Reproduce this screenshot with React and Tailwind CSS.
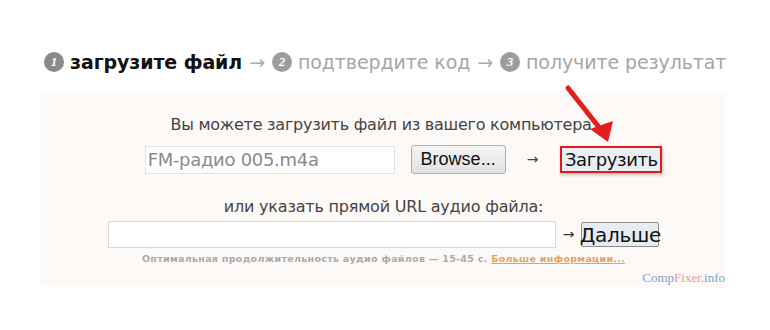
function Step({ n, active, children }) {
  return (
    <span className="inline-flex items-center gap-[6px]">
      <span
        className={`shrink-0 w-[20px] h-[20px] rounded-full flex items-center justify-center text-white text-[13px] font-bold italic ${
          active ? "bg-[#8a8a8a]" : "bg-[#9d9d9d]"
        }`}
        style={{ fontFamily: "'Liberation Serif', serif" }}
      >
        {n}
      </span>
      <span className={active ? "font-bold text-[#111]" : "text-[#a6a6a6]"}>{children}</span>
    </span>
  );
}

export default function App() {
  return (
    <div
      className="w-[770px] h-[330px] bg-white relative overflow-hidden"
      style={{ fontFamily: "'DejaVu Sans', Verdana, sans-serif" }}
    >
      {/* steps header */}
      <div className="pt-[50px] pl-[44px] flex items-center gap-[7px] text-[19px] leading-[24px] tracking-[-0.1px]">
        <Step n="1" active>
          загрузите файл
        </Step>
        <span className="text-[#aaa]">→</span>
        <Step n="2">подтвердите код</Step>
        <span className="text-[#aaa]">→</span>
        <Step n="3">получите результат</Step>
      </div>

      {/* upload panel */}
      <div className="mt-[19px] mx-[42px] w-[683px] h-[192px] bg-[#fdf9f7] shadow-[0_0_6px_3px_#fefbfa] flex flex-col items-center">
        <p className="mt-[22px] text-[16px] leading-[20px] text-[#444] tracking-[-0.25px]">
          Вы можете загрузить файл из вашего компьютера.
        </p>
        <div className="mt-[10px] flex items-center ml-[40px]">
          <div className="w-[250px] h-[28px] bg-white border border-[#e2e2e2] flex items-center pl-[2px] text-[18px] text-[#8a8a8a] tracking-[-0.3px]">
            FM-радио 005.m4a
          </div>
          <button
            className="ml-[16px] w-[95px] h-[29px] rounded-[3px] border border-[#adadad] bg-gradient-to-b from-[#f4f4f4] to-[#e2e2e2] text-[18px] text-[#111] flex items-center justify-center"
            style={{ fontFamily: "'Liberation Sans', Arial, sans-serif" }}
          >
            Browse...
          </button>
          <span className="ml-[21px] text-[14px] text-[#444]">→</span>
          <button className="ml-[22px] w-[102px] h-[27px] border-2 border-[#e11b1b] bg-[#e9eef3] text-[18px] text-[#111] flex items-center justify-center shadow-[1px_2px_3px_rgba(0,0,0,0.25)] tracking-[-0.4px]">
            Загрузить
          </button>
        </div>

        <p className="mt-[23px] text-[16px] leading-[20px] text-[#444] tracking-[-0.2px]">
          или указать прямой URL аудио файла:
        </p>
        <div className="mt-[4px] flex items-center">
          <div className="w-[448px] h-[27px] bg-white border border-[#d9d9d9]" />
          <span className="ml-[7px] text-[14px] text-[#333]">→</span>
          <button className="ml-[7px] w-[78px] h-[25px] rounded-[2px] border border-[#8e8e8e] bg-[#e7ecf1] text-[20px] leading-[22px] text-[#111] flex items-center justify-center tracking-[-0.3px]">
            Дальше
          </button>
        </div>
        <p className="mt-[4px] text-[9.5px] font-bold text-[#aaa] tracking-[0.3px]">
          Оптимальная продолжительность аудио файлов — 15-45 с.{" "}
          <span className="text-[#e2a25e] underline">Больше информации...</span>
        </p>
        <div
          className="self-end mt-[2px] text-[13px] text-[#7f9fca]"
          style={{ fontFamily: "'Liberation Serif', serif" }}
        >
          Comp<span className="text-[#e49a9a]">Fixer</span>.info
        </div>
      </div>

      {/* red pointer arrow */}
      <svg className="absolute left-[560px] top-[82px]" width="60" height="66" viewBox="0 0 60 66">
        <line x1="8" y1="6" x2="38" y2="44" stroke="#e41d1d" strokeWidth="5" strokeLinecap="round" />
        <polygon points="30,47 53,39 48,60" fill="#e41d1d" />
      </svg>
    </div>
  );
}
